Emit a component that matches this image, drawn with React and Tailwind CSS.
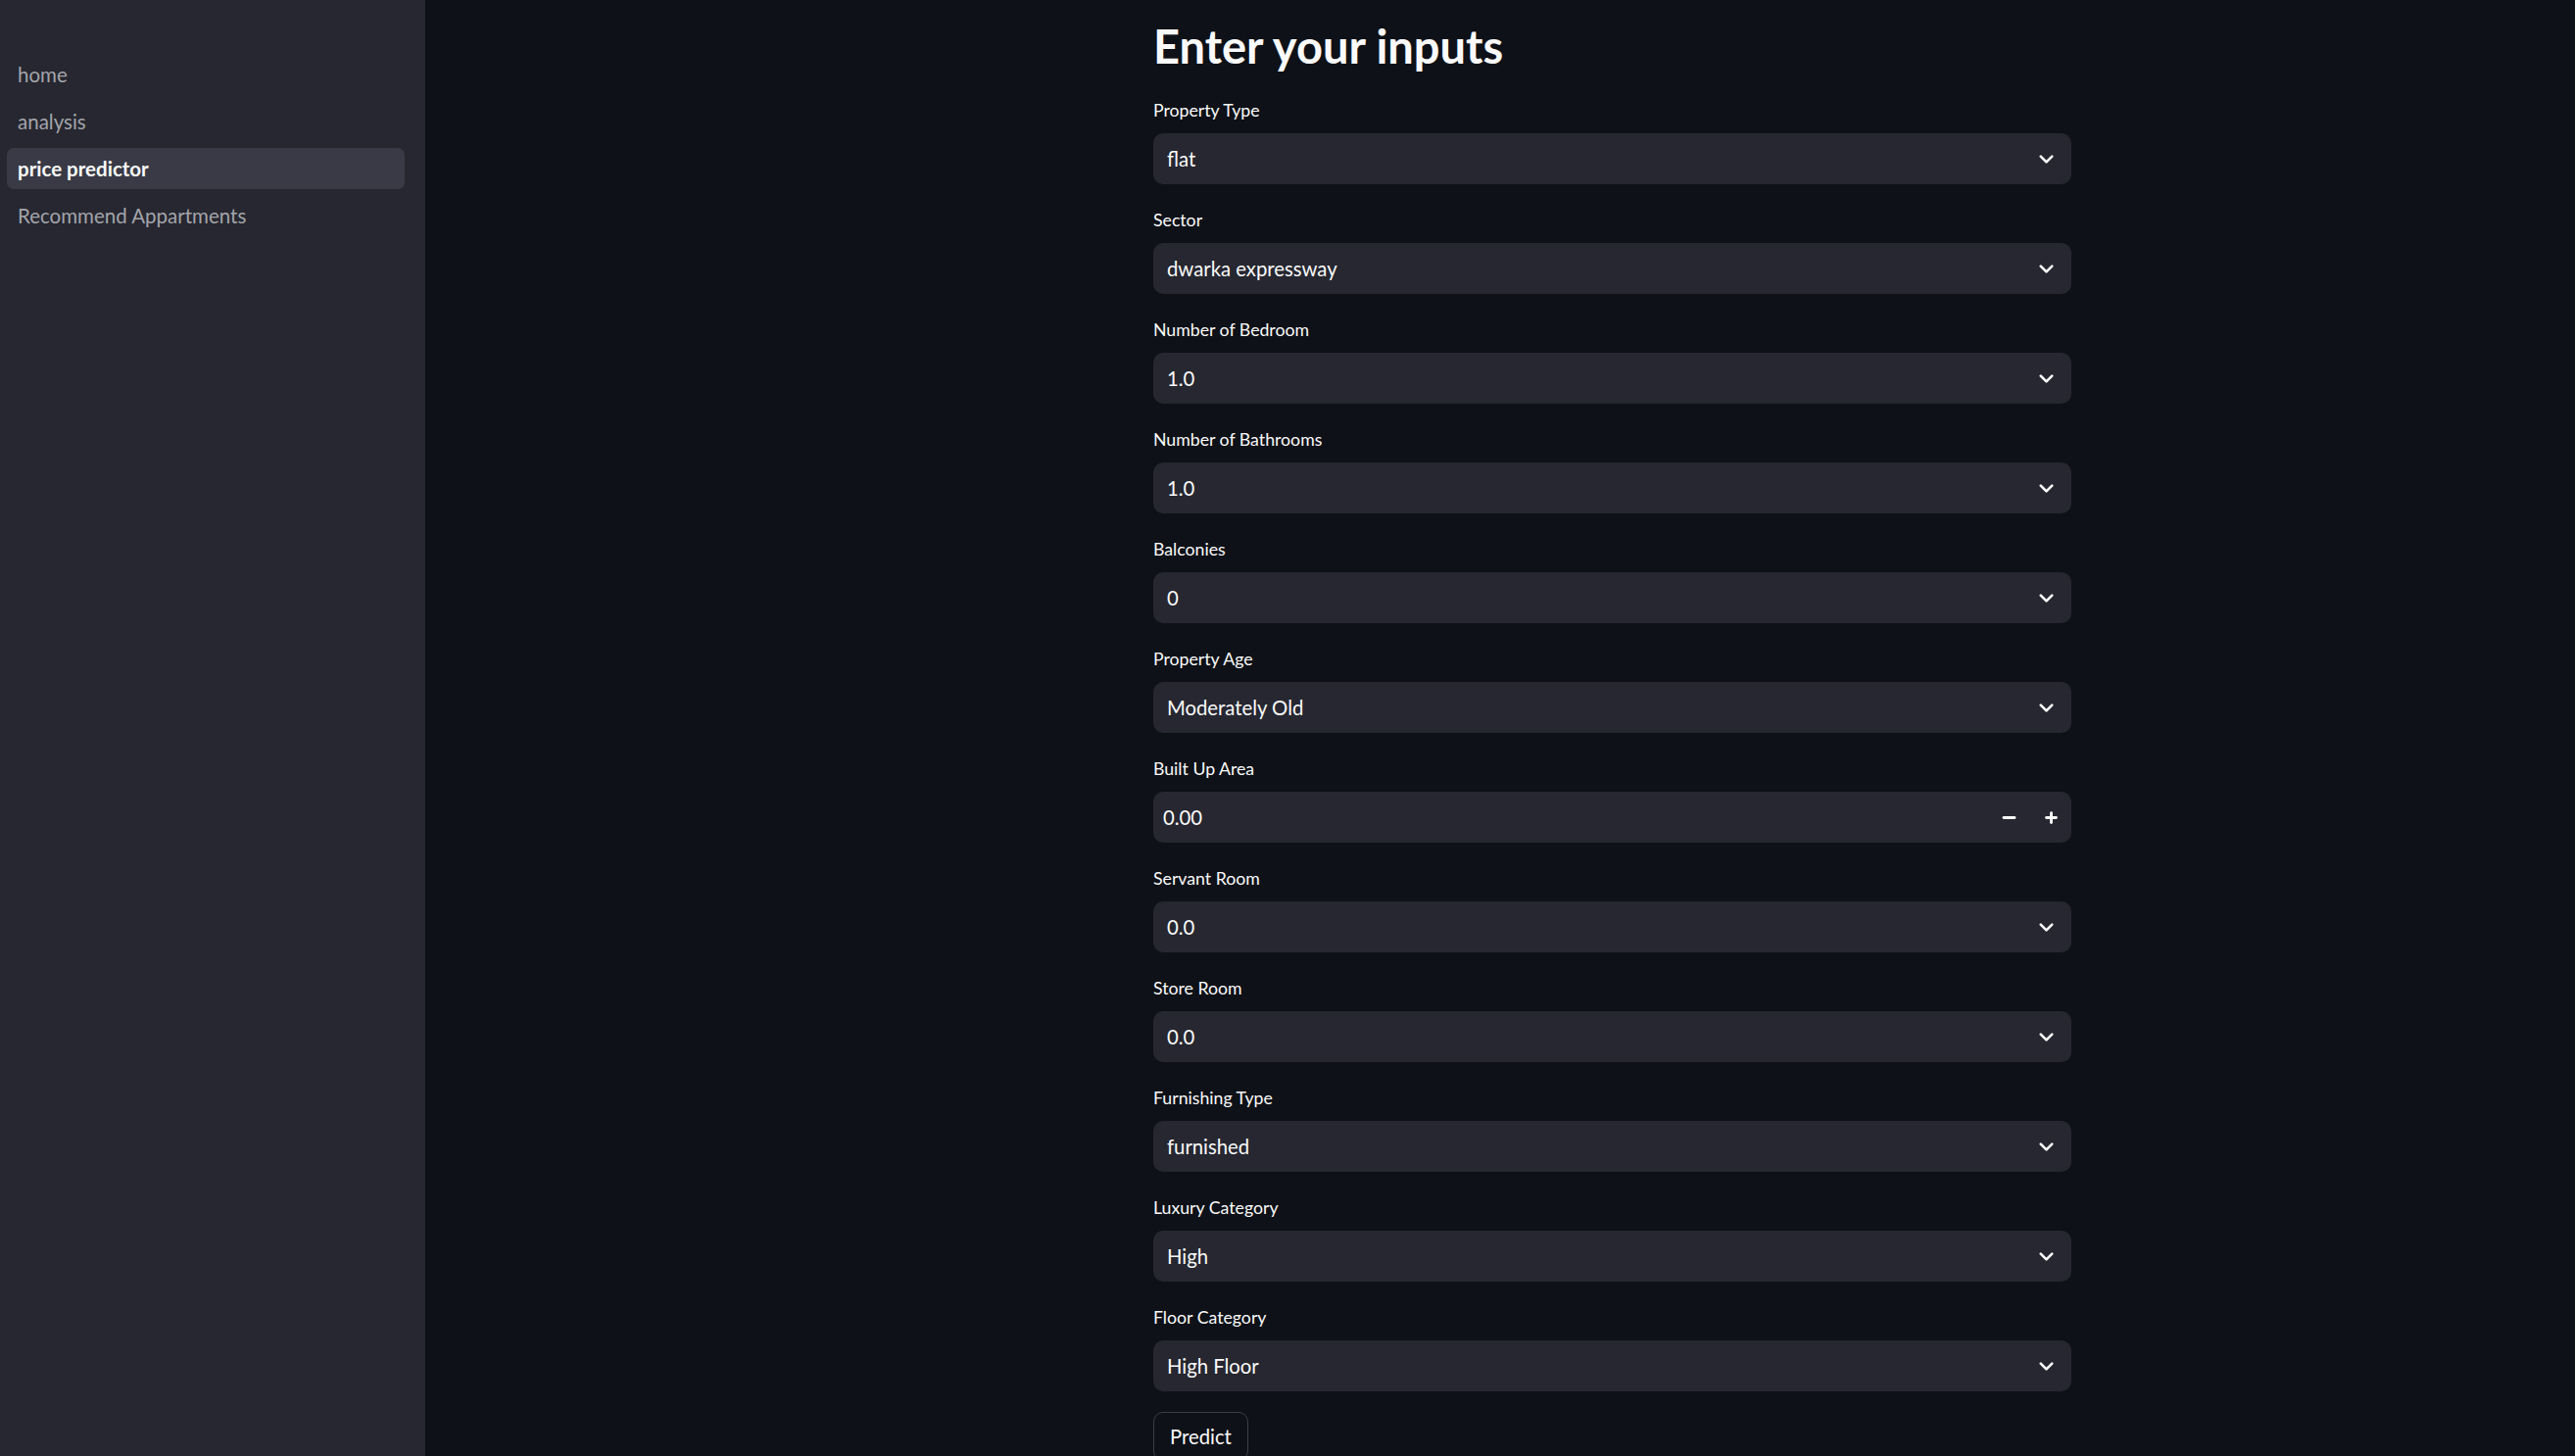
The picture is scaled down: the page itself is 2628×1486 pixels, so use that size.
import { ChevronDown, Minus, Plus } from 'lucide-react';

const navItems = [
    { label: 'home', active: false },
    { label: 'analysis', active: false },
    { label: 'price predictor', active: true },
    { label: 'Recommend Appartments', active: false },
];

const fields = [
    { label: 'Property Type', value: 'flat' },
    { label: 'Sector', value: 'dwarka expressway' },
    { label: 'Number of Bedroom', value: '1.0' },
    { label: 'Number of Bathrooms', value: '1.0' },
    { label: 'Balconies', value: '0' },
    { label: 'Property Age', value: 'Moderately Old' },
    { label: 'Built Up Area', value: '0.00', number: true },
    { label: 'Servant Room', value: '0.0' },
    { label: 'Store Room', value: '0.0' },
    { label: 'Furnishing Type', value: 'furnished' },
    { label: 'Luxury Category', value: 'High' },
    { label: 'Floor Category', value: 'High Floor' },
];

function Field({ label, value, number }) {
    return (
        <div className="flex flex-col">
            <label className="h-[24px] text-[17.7px] leading-[24px] text-[#fafafa]">{label}</label>
            {number ? (
                <div className="mt-[11px] flex h-[52px] items-center rounded-[10px] bg-[#262730] pl-[10px] pr-[12px] text-[20.3px] text-[#fafafa]">
                    <span className="flex-1">{value}</span>
                    <Minus className="mr-[25px] h-[19px] w-[19px]" strokeWidth={3.5} />
                    <Plus className="h-[17px] w-[17px]" strokeWidth={4} />
                </div>
            ) : (
                <div className="mt-[11px] flex h-[52px] items-center rounded-[10px] bg-[#262730] pl-[14px] pr-[14px] text-[20.3px] text-[#fafafa]">
                    <span className="flex-1">{value}</span>
                    <ChevronDown className="h-[23px] w-[23px]" strokeWidth={2.8} />
                </div>
            )}
        </div>
    );
}

export default function App() {
    return (
        <div className="flex h-screen overflow-hidden bg-[#0e1117] font-['Lato',sans-serif] text-[#fafafa]">
            <aside className="w-[434px] shrink-0 bg-[#262730] pl-[7px] pr-[21px] pt-[55px]">
                <nav className="flex flex-col gap-[6px]">
                    {navItems.map((item) => (
                        <div
                            key={item.label}
                            className={`flex h-[42px] items-center rounded-[7px] pl-[11px] text-[20.5px] ${
                                item.active ? 'bg-[#393a45] font-bold text-[#fafafa]' : 'text-[#a3a4ab]'
                            }`}
                        >
                            {item.label}
                        </div>
                    ))}
                </nav>
            </aside>

            <main className="flex-1 pl-[743px]">
                <div className="w-[937px] pt-[19px]">
                    <h1 className="h-[56px] text-[47px] font-bold leading-[56px]">Enter your inputs</h1>
                    <div className="mt-[26px] flex flex-col gap-[25px]">
                        {fields.map((field) => (
                            <Field key={field.label} {...field} />
                        ))}
                    </div>
                    <button
                        type="button"
                        className="mt-[21px] h-[50px] rounded-[10px] border border-[#3d3f45] px-[16px] text-[20.3px] text-[#fafafa]"
                    >
                        Predict
                    </button>
                </div>
            </main>
        </div>
    );
}
